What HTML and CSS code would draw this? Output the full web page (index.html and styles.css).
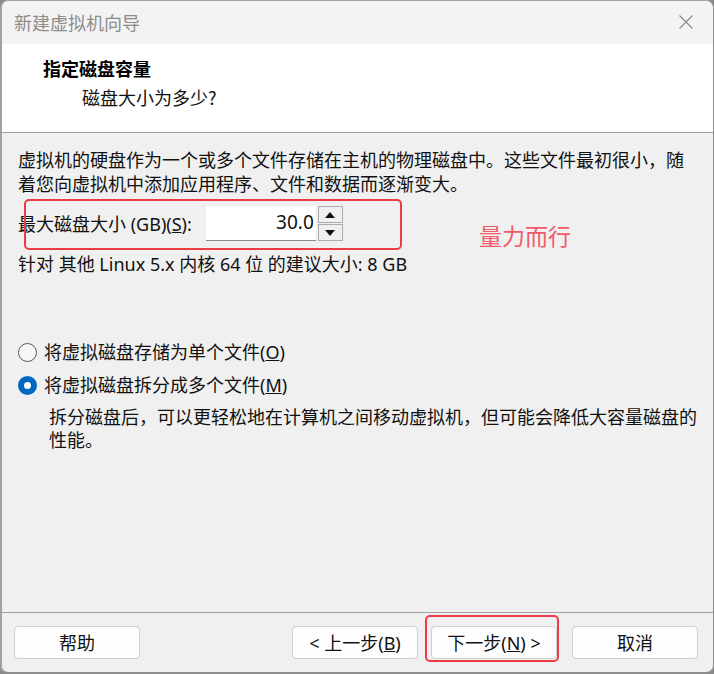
FILE: index.html
```html
<!DOCTYPE html>
<html lang="zh-CN">
<head>
<meta charset="utf-8">
<title>新建虚拟机向导</title>
<link rel="stylesheet" href="styles.css">
</head>
<body>
<div class="window">
  <div class="titlebar">
    <span class="title">新建虚拟机向导</span>
    <svg class="close" width="16" height="16" viewBox="0 0 16 16"><path d="M1.5 1.5 L14.5 14.5 M14.5 1.5 L1.5 14.5" stroke="#8a8a8a" stroke-width="1.2" fill="none"/></svg>
  </div>
  <div class="header">
    <div class="h-title">指定磁盘容量</div>
    <div class="h-sub">磁盘大小为多少?</div>
  </div>
  <div class="content">
    <p class="desc">虚拟机的硬盘作为一个或多个文件存储在主机的物理磁盘中。这些文件最初很小，随着您向虚拟机中添加应用程序、文件和数据而逐渐变大。</p>
    <div class="size-row">
      <span class="label">最大磁盘大小 (GB)(<u>S</u>):</span>
      <div class="input">30.0</div>
      <div class="spin">
        <div class="spin-btn"><svg width="10" height="6" viewBox="0 0 10 6"><path d="M0 6 L5 0 L10 6 Z" fill="#111"/></svg></div>
        <div class="spin-btn"><svg width="10" height="6" viewBox="0 0 10 6"><path d="M0 0 L5 6 L10 0 Z" fill="#111"/></svg></div>
      </div>
      <div class="mark mark-size"></div>
      <span class="note">量力而行</span>
    </div>
    <p class="rec">针对 其他 Linux 5.x 内核 64 位 的建议大小: 8 GB</p>
    <div class="radios">
      <div class="radio-row"><span class="radio"></span><span>将虚拟磁盘存储为单个文件(<u>O</u>)</span></div>
      <div class="radio-row"><span class="radio checked"></span><span>将虚拟磁盘拆分成多个文件(<u>M</u>)</span></div>
      <p class="radio-desc">拆分磁盘后，可以更轻松地在计算机之间移动虚拟机，但可能会降低大容量磁盘的性能。</p>
    </div>
  </div>
  <div class="footer">
    <button class="btn">帮助</button>
    <div class="spacer"></div>
    <button class="btn">&lt; 上一步(<u>B</u>)</button>
    <div class="btn-wrap">
      <button class="btn">下一步(<u>N</u>) &gt;</button>
      <div class="mark mark-next"></div>
    </div>
    <button class="btn">取消</button>
  </div>
</div>
</body>
</html>
```
FILE: styles.css
```css
html, body {
  margin: 0;
  padding: 0;
}
body {
  background: #8a8a8a;
  width: 714px;
  height: 674px;
  overflow: hidden;
  font-family: "Noto Sans", "Noto Sans CJK SC", sans-serif;
  font-size: 18px;
  color: #111;
}
.window {
  box-sizing: border-box;
  width: 714px;
  height: 674px;
  border: 1px solid #a2a2a2;
  border-right-color: #8e8e8e;
  border-bottom: 2px solid #8e8e8e;
  border-left-width: 2px;
  border-radius: 8px;
  overflow: hidden;
  background: #f0f0f0;
  display: flex;
  flex-direction: column;
}
.titlebar {
  height: 43px;
  background: #f3f3f3;
  display: flex;
  align-items: center;
  justify-content: space-between;
  padding: 0 19px 0 12px;
  flex: none;
}
.title {
  color: #8c8c8c;
  font-family: "Noto Sans CJK SC", sans-serif;
  font-size: 18px;
  line-height: 24px;
  margin-top: -2px;
}
.close {
  display: block;
  margin-top: -1px;
}
.header {
  background: #fff;
  height: 89px;
  box-sizing: border-box;
  padding: 12px 0 0 41px;
  border-bottom: 1px solid #a0a0a0;
  flex: none;
}
.h-title {
  font-family: "Noto Sans CJK SC", sans-serif;
  font-weight: 700;
  font-size: 18px;
  line-height: 24px;
  color: #000;
}
.h-sub {
  font-family: "Noto Sans CJK SC", sans-serif;
  font-size: 18px;
  line-height: 24px;
  margin-top: 5px;
  padding-left: 39px;
}
.content {
  flex: 1;
  padding: 15px 16px 0 16px;
  position: relative;
  border-bottom: 1px solid #a0a0a0;
  box-sizing: border-box;
}
.desc {
  margin: 0;
  line-height: 24px;
}
.size-row {
  margin-top: 10px;
  height: 35px;
  display: flex;
  align-items: center;
  position: relative;
}
.label {
  line-height: 24px;
  margin-right: 14px;
}
.input {
  box-sizing: border-box;
  width: 110px;
  height: 35px;
  background: #fff;
  border-bottom: 1px solid #8a8a8a;
  text-align: right;
  padding-right: 2px;
  line-height: 33px;
  font-size: 19px;
}
.spin {
  margin-left: 2px;
  width: 25px;
  height: 35px;
  display: flex;
  flex-direction: column;
  gap: 1px;
}
.spin-btn {
  flex: 1;
  box-sizing: border-box;
  border: 1px solid #adadad;
  background: #f0f0f0;
  display: flex;
  align-items: center;
  justify-content: center;
}
.mark {
  position: absolute;
  border: 2px solid #ee3b43;
  border-radius: 5px;
  box-sizing: border-box;
  pointer-events: none;
}
.mark-size {
  left: 6px;
  top: -7px;
  width: 378px;
  height: 51px;
}
.note {
  position: absolute;
  left: 461px;
  top: 15px;
  color: #f25a6a;
  font-family: "Noto Sans CJK SC", sans-serif;
  font-size: 23px;
  line-height: 28px;
}
.rec {
  margin: 11px 0 0 0;
  line-height: 24px;
}
.radios {
  margin-top: 64px;
}
.radio-row {
  display: flex;
  align-items: center;
  height: 24px;
  margin-bottom: 9px;
  line-height: 24px;
}
.radio {
  box-sizing: border-box;
  width: 19px;
  height: 19px;
  border-radius: 50%;
  border: 1px solid #5a5a5a;
  background: #f7f7f7;
  margin-right: 7px;
  flex: none;
}
.radio.checked {
  border: 6px solid #0067c0;
  background: #fff;
}
.radio-desc {
  margin: 8px 0 0 31px;
  line-height: 23px;
}
.footer {
  flex: none;
  height: 59px;
  display: flex;
  align-items: flex-start;
  padding: 13px 15px 0 12px;
  box-sizing: border-box;
  gap: 13px;
}
.spacer {
  flex: 1;
}
.btn {
  width: 126px;
  height: 33px;
  background: #fdfdfd;
  border: 1px solid #d0d0d0;
  border-radius: 4px;
  font-family: "Noto Sans", "Noto Sans CJK SC", sans-serif;
  font-size: 18px;
  color: #111;
  padding: 0;
  line-height: 30px;
}
.btn-wrap {
  position: relative;
  margin-right: 2px;
}
.mark-next {
  left: -6px;
  top: -11px;
  width: 134px;
  height: 47px;
  border-radius: 5px;
}
```
